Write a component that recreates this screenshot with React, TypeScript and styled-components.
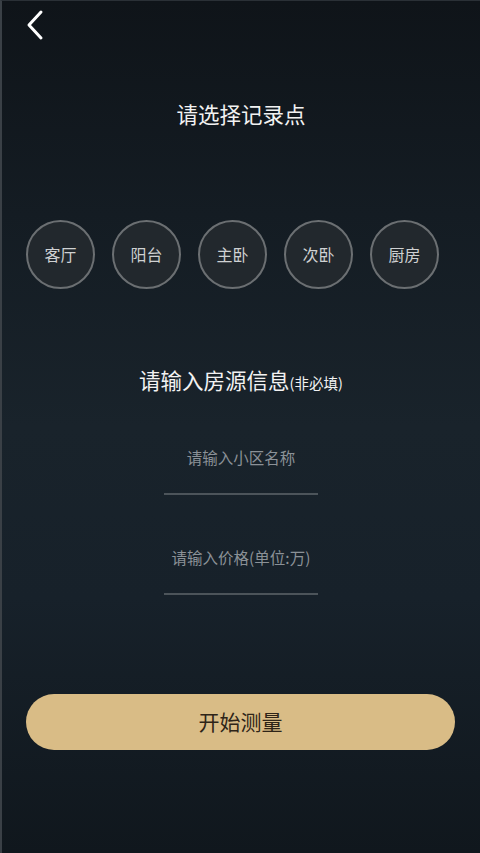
import React from "react";
import styled, { createGlobalStyle } from "styled-components";

const Global = createGlobalStyle`
  html, body { margin: 0; padding: 0; background: #10161b; }
  body { font-family: "Noto Sans CJK SC", "Noto Sans", sans-serif; }
  * { box-sizing: border-box; }
`;

const Page = styled.div`
  width: 480px;
  height: 853px;
  background: linear-gradient(180deg, #0f1419 0%, #141c23 25%, #19232b 50%, #17212a 70%, #10171d 100%);
  border-left: 2px solid #3a4046;
  border-top: 1px solid #2a3036;
  display: flex;
  flex-direction: column;
  overflow: hidden;
`;

const TopBar = styled.div`
  height: 48px;
  padding: 8px 0 0 22px;
  display: flex;
  align-items: flex-start;
`;

const BackButton = styled.button`
  background: none;
  border: none;
  padding: 0;
  width: 24px;
  height: 32px;
  cursor: pointer;
`;

const SectionTitle = styled.h2<{ $top: number }>`
  margin: ${(p) => p.$top}px 0 0;
  text-align: center;
  color: #f2f2f2;
  font-size: 21.5px;
  font-weight: 400;
  line-height: 28px;
`;

const Note = styled.span`
  font-size: 14.5px;
`;

const Chips = styled.div`
  margin-top: 92px;
  padding-left: 24px;
  display: flex;
  gap: 17px;
`;

const Chip = styled.button`
  width: 69px;
  height: 69px;
  border-radius: 50%;
  border: 2px solid #6b6f72;
  background: #22282d;
  color: #cfd1d2;
  font-family: inherit;
  font-size: 16px;
  padding: 0 0 2px;
  display: flex;
  align-items: center;
  justify-content: center;
`;

const Field = styled.div<{ $top: number }>`
  margin: ${(p) => p.$top}px auto 0;
  width: 154px;
  display: flex;
  flex-direction: column;
  align-items: center;
`;

const Input = styled.input`
  width: 180px;
  height: 36px;
  background: transparent;
  border: none;
  outline: none;
  text-align: center;
  color: #e0e0e0;
  font-family: inherit;
  font-size: 15.5px;
  &::placeholder { color: #8b9197; }
`;

const Underline = styled.div`
  margin-top: 18px;
  width: 154px;
  height: 2px;
  background: #4c545a;
`;

const StartButton = styled.button`
  margin: 99px 0 0 24px;
  width: 429px;
  height: 56px;
  border-radius: 28px;
  border: none;
  background: #d9bc86;
  color: #2e2418;
  font-family: inherit;
  font-size: 21px;
  padding: 0 0 2px;
  display: flex;
  align-items: center;
  justify-content: center;
`;

const rooms = ["客厅", "阳台", "主卧", "次卧", "厨房"];

export default function App() {
  return (
    <>
      <Global />
      <Page>
        <TopBar>
          <BackButton aria-label="back">
            <svg width="24" height="32" viewBox="0 0 24 32">
              <path d="M17 3 L5 16 L17 29" fill="none" stroke="#ffffff" strokeWidth="3" strokeLinecap="round" strokeLinejoin="round" />
            </svg>
          </BackButton>
        </TopBar>
        <SectionTitle $top={51}>请选择记录点</SectionTitle>
        <Chips>
          {rooms.map((r) => (
            <Chip key={r}>{r}</Chip>
          ))}
        </Chips>
        <SectionTitle $top={77}>
          请输入房源信息<Note>(非必填)</Note>
        </SectionTitle>
        <Field $top={42}>
          <Input placeholder="请输入小区名称" />
          <Underline />
        </Field>
        <Field $top={44}>
          <Input placeholder="请输入价格(单位:万)" />
          <Underline />
        </Field>
        <StartButton>开始测量</StartButton>
      </Page>
    </>
  );
}
